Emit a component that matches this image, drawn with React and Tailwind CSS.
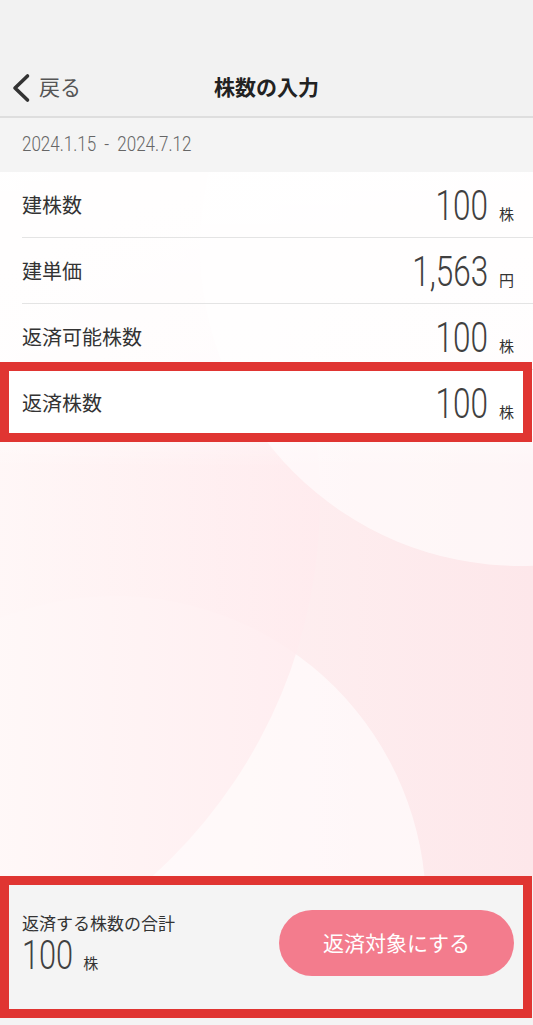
import React from "react";

const JP = "font-['Noto_Sans_CJK_JP','Noto_Sans',sans-serif]";
const NUM = "font-['Roboto','Noto_Sans',sans-serif]";

function Num({ children, origin = "origin-right", size = "text-[42px]" }) {
  return (
    <span
      className={`${NUM} ${origin} ${size} inline-block scale-x-[0.75] font-light leading-none text-[#404040]`}
    >
      {children}
    </span>
  );
}

function Row({ label, value, unit, last }) {
  return (
    <div className="pl-[22px]">
      <div
        className={`flex h-[66px] items-center justify-between pr-[19px] ${
          last ? "" : "border-b border-[#e4e4e4]"
        }`}
      >
        <span className={`${JP} text-[20px] text-[#333]`}>{label}</span>
        <div className="flex items-baseline pt-[2px]">
          <Num>{value}</Num>
          <span className={`${JP} ml-[11px] text-[15px] text-[#333]`}>{unit}</span>
        </div>
      </div>
    </div>
  );
}

export default function App() {
  return (
    <div className={`${JP} flex h-[1025px] w-[533px] flex-col overflow-hidden bg-[#f2f2f2]`}>
      {/* status area */}
      <div className="h-[58px] shrink-0 bg-[#f2f2f2]" />

      {/* header */}
      <div className="grid h-[60px] shrink-0 grid-cols-[1fr_auto_1fr] items-center border-b-2 border-[#dedede] bg-[#f2f2f2]">
        <div className="flex items-center pl-[11px]">
          <svg width="20" height="30" viewBox="0 0 20 30" className="mt-[1px]">
            <polyline
              points="16.5,3 4,15 16.5,27"
              fill="none"
              stroke="#333"
              strokeWidth="3.6"
              strokeLinecap="round"
              strokeLinejoin="round"
            />
          </svg>
          <span className="ml-[8px] text-[21px] text-[#555]">戻る</span>
        </div>
        <div className="text-[21px] font-bold text-[#222]">株数の入力</div>
        <div />
      </div>

      {/* date row */}
      <div className="flex h-[54px] shrink-0 items-center bg-[#f4f4f4] pl-[22px]">
        <span
          className={`${NUM} inline-block origin-left scale-x-[0.81] text-[21px] font-light text-[#666]`}
        >
          2024.1.15<span className="px-[10px]">-</span>2024.7.12
        </span>
      </div>

      {/* main */}
      <div className="relative flex-1">
        <svg
          className="absolute inset-0 h-full w-full"
          viewBox="0 0 533 704"
          preserveAspectRatio="none"
        >
          <defs>
            <linearGradient id="base" x1="0" y1="0" x2="1" y2="0">
              <stop offset="0" stopColor="#fff6f6" />
              <stop offset="1" stopColor="#fde7ea" />
            </linearGradient>
            <linearGradient id="c2" gradientUnits="userSpaceOnUse" x1="0" y1="0" x2="320" y2="0">
              <stop offset="0" stopColor="#fff7f7" />
              <stop offset="1" stopColor="#ffebee" />
            </linearGradient>
            <linearGradient id="topfade" x1="0" y1="0" x2="0" y2="1">
              <stop offset="0" stopColor="#ffffff" stopOpacity="0.95" />
              <stop offset="0.33" stopColor="#ffffff" stopOpacity="0.8" />
              <stop offset="0.42" stopColor="#ffffff" stopOpacity="0" />
            </linearGradient>
          </defs>
          <rect x="0" y="0" width="533" height="704" fill="url(#base)" />
          <circle cx="115" cy="735" r="311" fill="#ffffff" fillOpacity="0.6" />
          <circle cx="-186" cy="328" r="506" fill="url(#c2)" fillOpacity="0.85" />
          <circle cx="520" cy="74" r="320" fill="#ffffff" fillOpacity="0.6" />
          <rect x="0" y="0" width="533" height="704" fill="url(#topfade)" />
        </svg>

        <div className="relative">
          <Row label="建株数" value="100" unit="株" />
          <Row label="建単価" value="1,563" unit="円" />
          <Row label="返済可能株数" value="100" unit="株" />
          <div className="relative bg-white">
            <Row label="返済株数" value="100" unit="株" last />
            <div className="pointer-events-none absolute -top-[8px] -bottom-[6px] left-0 right-[1px] border-[9px] border-[#e03532]" />
          </div>
        </div>
      </div>

      {/* bottom panel */}
      <div className="relative h-[149px] shrink-0 bg-[#f4f4f4]">
        <div className="flex items-center justify-between pl-[22px] pr-[19px] pt-[34px]">
          <div className="flex flex-col">
            <span className="text-[17px] leading-[24px] text-[#333]">返済する株数の合計</span>
            <div className="flex items-baseline">
              <Num origin="origin-left" size="text-[41px]">100</Num>
              <span className="ml-[-7px] text-[15px] text-[#333]">株</span>
            </div>
          </div>
          <button className="flex h-[66px] w-[235px] items-center justify-center rounded-full bg-[#f37c8d] text-[21px] text-white">
            返済対象にする
          </button>
        </div>
        <div className="pointer-events-none absolute top-0 left-0 right-[1px] bottom-[7px] border-[9px] border-[#e03532]" />
      </div>
    </div>
  );
}
